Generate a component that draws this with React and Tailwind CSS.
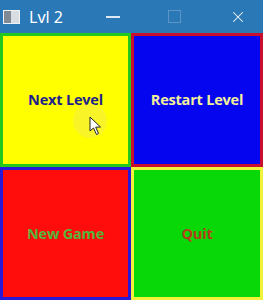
import { X } from 'lucide-react';

const Cell = ({ bg, border, color, label, children }) => (
  <div className={`relative flex items-center justify-center border-[3px] ${bg} ${border}`}>
    <span className={`text-[14.5px] font-bold tracking-[-0.2px] ${color}`}>{label}</span>
    {children}
  </div>
);

export default function App() {
  return (
    <div
      className="w-[263px] h-[300px] flex flex-col bg-[#2b78b6] overflow-hidden"
      style={{ fontFamily: '"Open Sans", "Noto Sans", sans-serif' }}
    >
      {/* title bar */}
      <div className="h-[33px] flex items-center text-white shrink-0">
        <div className="ml-[3px] w-[17px] h-[14px] bg-[#d8dde2] border border-[#eef2f5] flex">
          <div className="w-[7px] h-full bg-[#7f8a94]" />
        </div>
        <span className="ml-[9px] text-[16px] leading-none" style={{ fontFamily: '"Noto Sans", sans-serif' }}>Lvl 2</span>
        <div className="ml-[43px] w-[14px] h-[2px] bg-[#dce8f3]" />
        <div className="ml-[48px] w-[13px] h-[13px] border border-[#5d95c6]" />
        <X size={18} strokeWidth={1.4} className="ml-[48px] text-[#eef4fa]" />
      </div>

      <div className="flex-1 grid grid-cols-[131px_1fr] grid-rows-[134px_1fr]">
        <Cell bg="bg-[#ffff00]" border="border-[#22c81c]" color="text-[#1e1e8c]" label="Next Level">
          <div className="absolute left-[70px] top-[68px] w-[34px] h-[34px] rounded-full bg-[#f4ea50] opacity-50" />
          <svg className="absolute left-[86px] top-[80px]" width="14" height="20" viewBox="0 0 14 20">
            <path d="M1 1 L1 15 L4.5 12 L7.5 18.5 L9.5 17.5 L6.7 11.2 L11.5 11 Z" fill="#fff" stroke="#222" strokeWidth="1" strokeLinejoin="round" />
          </svg>
        </Cell>
        <Cell bg="bg-[#0505f0]" border="border-[#c8102e]" color="text-[#f3f09a]" label="Restart Level" />
        <Cell bg="bg-[#ff0c0c]" border="border-[#2a18d8]" color="text-[#56b43a]" label="New Game" />
        <Cell bg="bg-[#08d808]" border="border-[#f2f23a]" color="text-[#b0401a]" label="Quit" />
      </div>
    </div>
  );
}
